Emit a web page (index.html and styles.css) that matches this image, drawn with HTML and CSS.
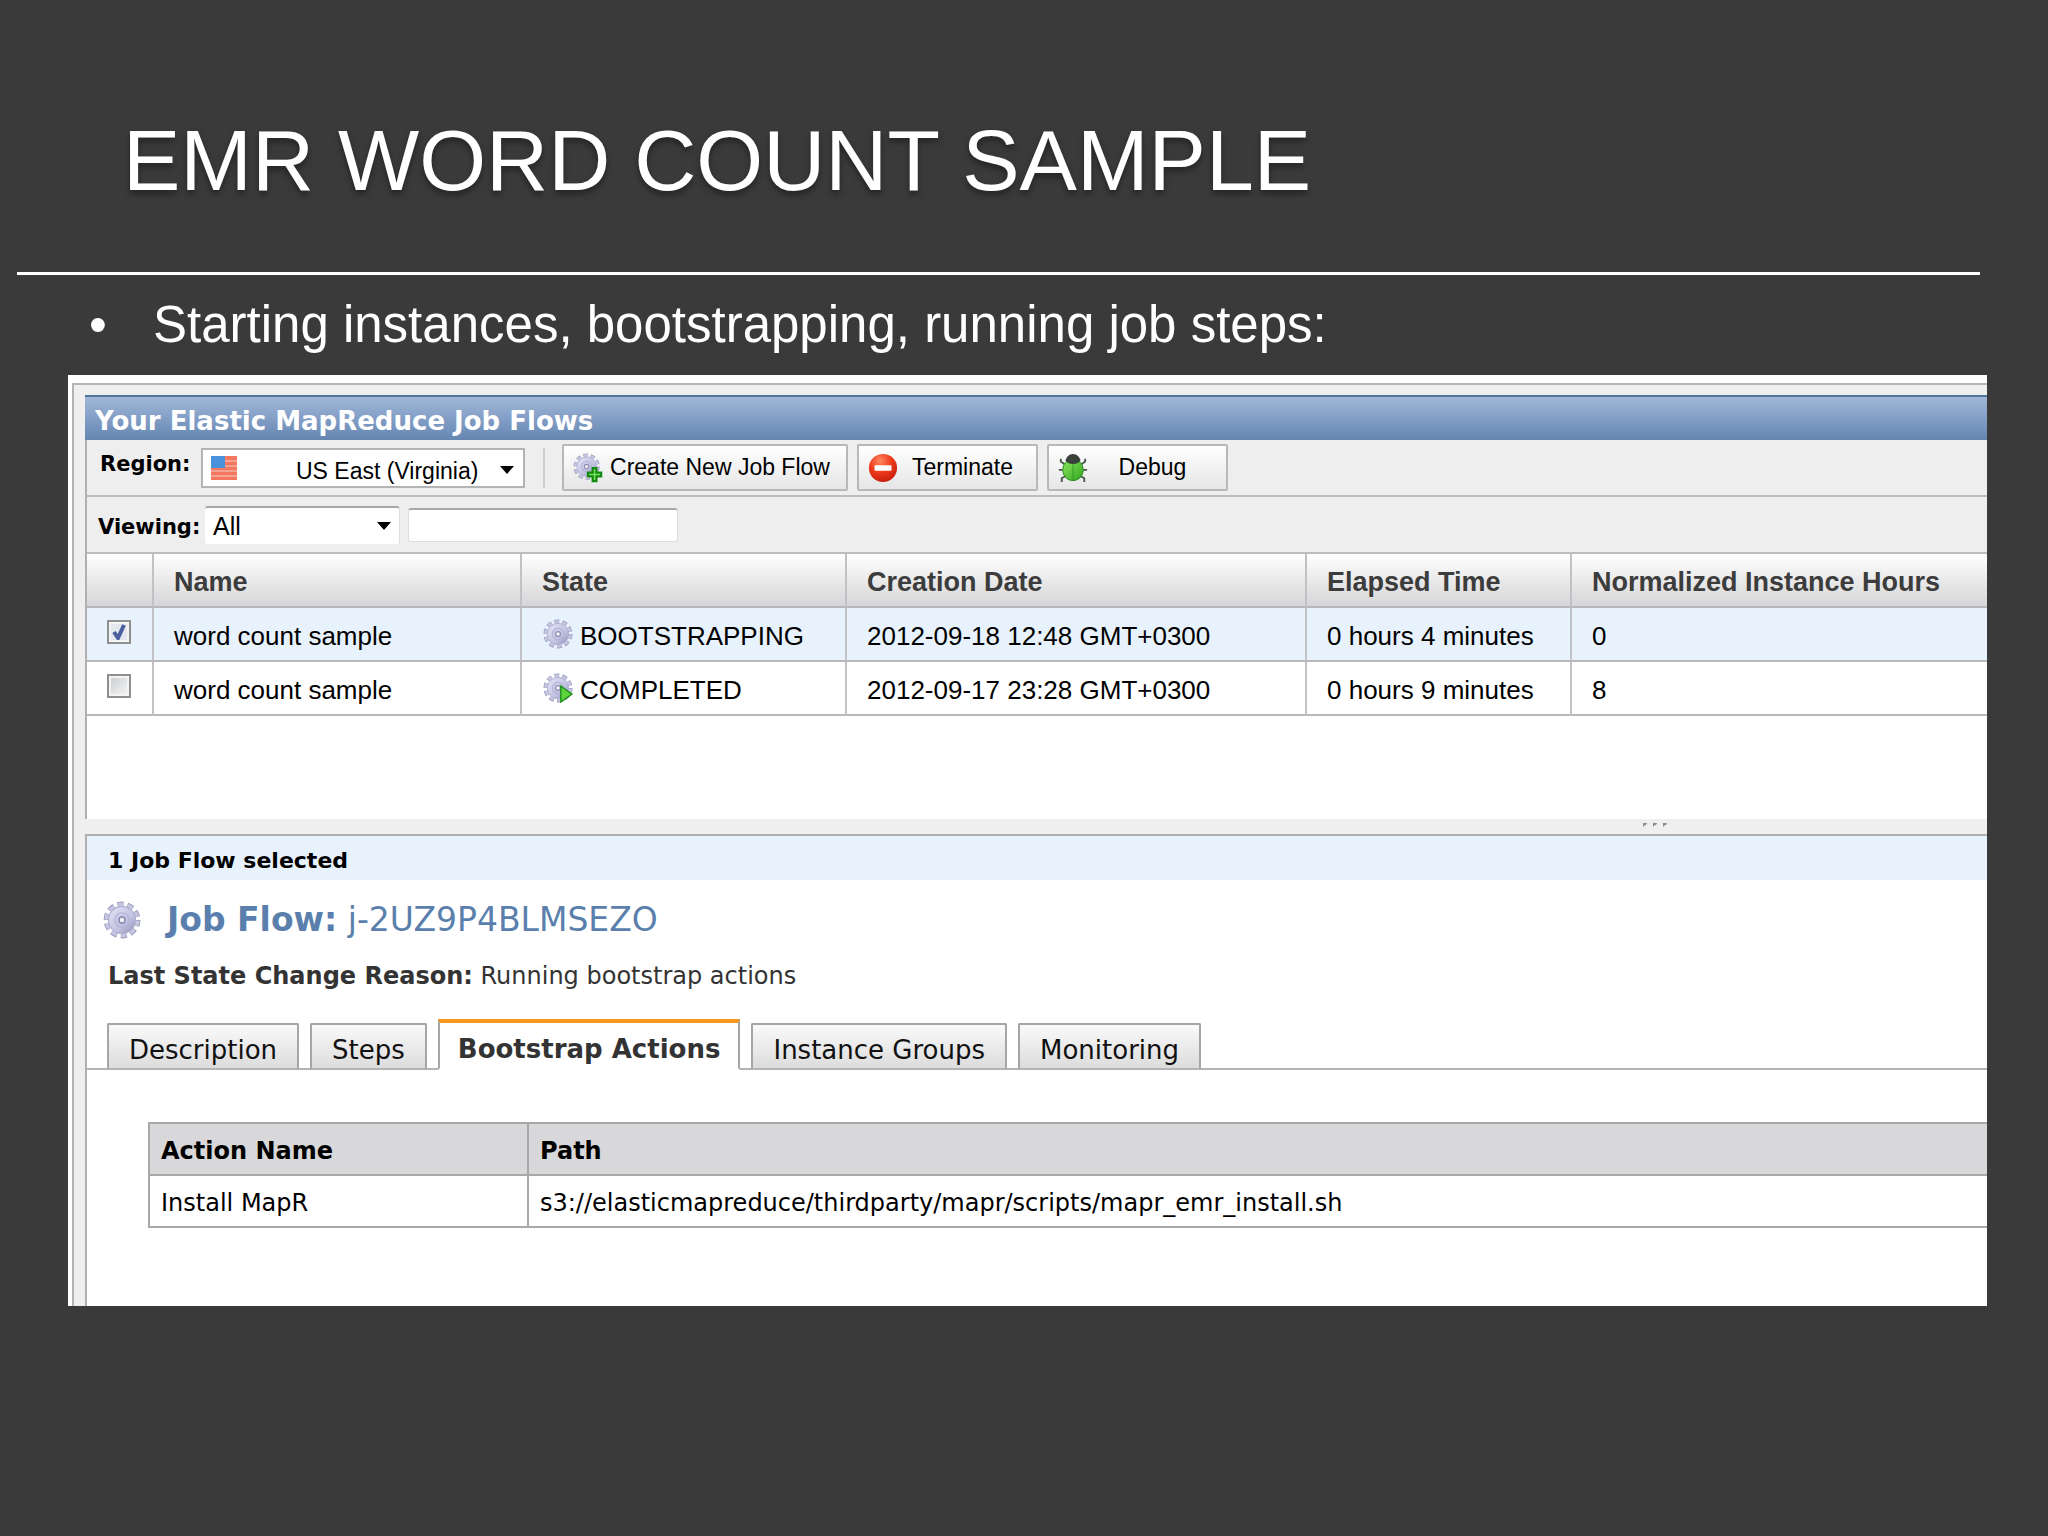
FILE: index.html
```html
<!DOCTYPE html>
<html lang="en">
<head>
    <meta charset="UTF-8">
    <meta name="viewport" content="width=device-width, initial-scale=1.0">
    <title>EMR Word Count Sample</title>
    <link rel="stylesheet" href="styles.css">
</head>
<body>
    <svg class="defs" width="0" height="0" aria-hidden="true">
        <defs>
            <linearGradient id="gearFill" x1="0" y1="0" x2="1" y2="1">
                <stop offset="0" stop-color="#e4e4f6"/>
                <stop offset="0.6" stop-color="#c3c3e2"/>
                <stop offset="1" stop-color="#8f8fb8"/>
            </linearGradient>
            <radialGradient id="redFill" cx="0.4" cy="0.25" r="0.8">
                <stop offset="0" stop-color="#ff8a60"/>
                <stop offset="0.5" stop-color="#ee3a1c"/>
                <stop offset="1" stop-color="#c41c0c"/>
            </radialGradient>
            <linearGradient id="bugFill" x1="0" y1="0" x2="1" y2="1">
                <stop offset="0" stop-color="#8ee860"/>
                <stop offset="1" stop-color="#2fa51c"/>
            </linearGradient>
            <symbol id="gear" viewBox="0 0 32 32">
                <circle cx="16" cy="16" r="13" fill="none" stroke="#9a9abc" stroke-width="5" stroke-dasharray="5 3.168"/>
                <circle cx="16" cy="16" r="12.7" fill="none" stroke="#c6c6e2" stroke-width="4" stroke-dasharray="4 3.98" stroke-dashoffset="-0.5"/>
                <circle cx="16" cy="16" r="11.4" fill="url(#gearFill)" stroke="#b0b0d0" stroke-width="1"/>
                <circle cx="16" cy="16" r="6" fill="none" stroke="#b4b4d6" stroke-width="1.2"/>
                <circle cx="16" cy="16" r="2.6" fill="#f2f2fa" stroke="#9090b4" stroke-width="1.4"/>
            </symbol>
        </defs>
    </svg>

    <header class="slide-header">
        <h1>EMR WORD COUNT SAMPLE</h1>
    </header>

    <main>
        <ul class="bullets">
            <li>Starting instances, bootstrapping, running job steps:</li>
        </ul>

        <div class="console">
            <div class="frame">
                <section class="flows">
                    <h2 class="flows-title">Your Elastic MapReduce Job Flows</h2>

                    <div class="toolbar">
                        <label class="region-label" for="region">Region:</label>
                        <div class="region-box">
                            <svg class="flag" viewBox="0 0 26 24" aria-hidden="true">
                                <rect width="26" height="24" fill="#f4775f"/>
                                <path d="M0 5h26M0 10h26M0 15h26M0 20h26" stroke="#f9b3a2" stroke-width="1.5"/>
                                <rect width="14" height="12" fill="#4a92dc"/>
                            </svg>
                            <select id="region" class="region-select">
                                <option>US East (Virginia)</option>
                            </select>
                        </div>
                        <span class="separator"></span>
                        <div class="actions">
                            <button class="action create" type="button">
                                <svg class="action-icon" viewBox="0 0 32 32" aria-hidden="true">
                                    <use href="#gear" width="29" height="29"/>
                                    <path d="M21 16h4v5h5v4h-5v5h-4v-5h-5v-4h5z" fill="#7be35a" stroke="#128a12" stroke-width="2.4"/>
                                </svg>
                                <span>Create New Job Flow</span>
                            </button>
                            <button class="action" type="button">
                                <svg class="action-icon" viewBox="0 0 32 32" aria-hidden="true">
                                    <circle cx="16" cy="16" r="15" fill="url(#redFill)"/>
                                    <rect x="7" y="13" width="18" height="6" rx="1" fill="#fff"/>
                                </svg>
                                <span>Terminate</span>
                            </button>
                            <button class="action" type="button">
                                <svg class="action-icon" viewBox="0 0 32 32" aria-hidden="true">
                                    <path d="M7 12L3 9V6M25 12l4-3V6M7 18H1M25 18h6M9 24l-5 3v4M23 24l5 3v4" fill="none" stroke="#4a5a4a" stroke-width="2"/>
                                    <ellipse cx="16" cy="18" rx="11" ry="11.5" fill="url(#bugFill)" stroke="#2a8a22"/>
                                    <path d="M8 8c1-4 4-7 8-7s7 3 8 7c-3 5-13 5-16 0z" fill="#3a403a"/>
                                    <path d="M16 12v17" stroke="#2f9a25" stroke-width="1"/>
                                </svg>
                                <span>Debug</span>
                            </button>
                        </div>
                    </div>

                    <div class="filterbar">
                        <label for="viewing">Viewing:</label>
                        <select id="viewing" class="viewing-select">
                            <option>All</option>
                        </select>
                        <input class="search" type="text" aria-label="Search job flows">
                    </div>

                    <table class="flow-table">
                        <thead>
                            <tr>
                                <th class="col-check"></th>
                                <th class="col-name">Name</th>
                                <th class="col-state">State</th>
                                <th class="col-date">Creation Date</th>
                                <th class="col-elapsed">Elapsed Time</th>
                                <th>Normalized Instance Hours</th>
                            </tr>
                        </thead>
                        <tbody>
                            <tr class="selected">
                                <td class="check-cell"><input type="checkbox" aria-label="Select bootstrapping job flow" checked></td>
                                <td>word count sample</td>
                                <td>
                                    <div class="state">
                                        <svg class="state-icon" viewBox="0 0 32 32" aria-hidden="true"><use href="#gear" width="32" height="32"/></svg>
                                        <span>BOOTSTRAPPING</span>
                                    </div>
                                </td>
                                <td>2012-09-18 12:48 GMT+0300</td>
                                <td>0 hours 4 minutes</td>
                                <td>0</td>
                            </tr>
                            <tr>
                                <td class="check-cell"><input type="checkbox" aria-label="Select completed job flow"></td>
                                <td>word count sample</td>
                                <td>
                                    <div class="state">
                                        <svg class="state-icon" viewBox="0 0 32 32" aria-hidden="true">
                                            <use href="#gear" width="32" height="32"/>
                                            <path d="M19 14l12 8.500-12 8.500z" fill="#5fd23c" stroke="#1c941c" stroke-width="1.5"/>
                                        </svg>
                                        <span>COMPLETED</span>
                                    </div>
                                </td>
                                <td>2012-09-17 23:28 GMT+0300</td>
                                <td>0 hours 9 minutes</td>
                                <td>8</td>
                            </tr>
                        </tbody>
                    </table>
                </section>

                <div class="splitter">
                    <svg class="grip" viewBox="0 0 28 6" aria-hidden="true">
                        <path d="M2 5V1h4l-1 2H4zM12 5V1h4l-1 2h-1zM22 5V1h4l-1 2h-1z" fill="#8c8c8c"/>
                    </svg>
                </div>

                <section class="details">
                    <p class="selection">1 Job Flow selected</p>
                    <h3 class="flow-id">
                        <svg class="flow-icon" viewBox="0 0 32 32" aria-hidden="true"><use href="#gear" width="32" height="32"/></svg>
                        <span><b>Job Flow:</b> j-2UZ9P4BLMSEZO</span>
                    </h3>
                    <p class="reason"><b>Last State Change Reason:</b> Running bootstrap actions</p>

                    <div class="tabs" role="tablist">
                        <button class="tab" type="button" role="tab">Description</button>
                        <button class="tab" type="button" role="tab">Steps</button>
                        <button class="tab active" type="button" role="tab" aria-selected="true">Bootstrap Actions</button>
                        <button class="tab" type="button" role="tab">Instance Groups</button>
                        <button class="tab" type="button" role="tab">Monitoring</button>
                    </div>

                    <div class="tab-panel">
                        <table class="action-table">
                            <thead>
                                <tr>
                                    <th class="col-action">Action Name</th>
                                    <th>Path</th>
                                </tr>
                            </thead>
                            <tbody>
                                <tr>
                                    <td>Install MapR</td>
                                    <td>s3://elasticmapreduce/thirdparty/mapr/scripts/mapr_emr_install.sh</td>
                                </tr>
                            </tbody>
                        </table>
                    </div>
                </section>
            </div>
        </div>
    </main>
</body>
</html>
```
FILE: styles.css
```css
* {
    box-sizing: border-box;
}
body {
    margin: 0;
    min-height: 100vh;
    background-color: #3b3a3b;
    color: #000;
    font-family: "Liberation Sans", Arial, sans-serif;
}
h1, h2, h3, p, ul {
    margin: 0;
    padding: 0;
}
.defs {
    position: absolute;
}

/* slide heading */
.slide-header {
    margin: 0 68px 0 17px;
    padding: 110px 0 62px 106px;
    border-bottom: 3px solid #fff;
}
h1 {
    color: #fff;
    font-size: 86px;
    font-weight: normal;
    line-height: 100px;
    text-shadow: 0 4px 6px rgba(0, 0, 0, 0.4);
}
.bullets {
    padding: 20px 0 20px 153px;
    color: #fff;
    font-size: 51px;
    line-height: 60px;
    list-style: none;
}
.bullets li::before {
    content: "•";
    float: left;
    margin-left: -64px;
}

/* console window */
.console {
    margin: 0 61px 0 68px;
    padding: 8px 0 0 4px;
    background-color: #fff;
}
.frame {
    padding: 10px 0 0 11px;
    background-color: #efefef;
    border: solid #b4b4b4;
    border-width: 2px 0 0 2px;
}
.flows {
    min-height: 424px;
    background-color: #fff;
    border-left: 2px solid #b0b0b0;
}
.flows-title {
    margin-left: -2px;
    padding: 7px 0 2px 10px;
    border-top: 2px solid #4f759e;
    background: linear-gradient(#a0b8d4, #89a3cb 40%, #6486b0);
    color: #fff;
    font: bold 26px/34px "DejaVu Sans", Verdana, sans-serif;
}
.toolbar,
.filterbar {
    display: flex;
    align-items: center;
    height: 57px;
    background-color: #efeeef;
    border-bottom: 2px solid #bcbcbc;
}
.toolbar label,
.filterbar label {
    font: bold 21px/24px "DejaVu Sans", Verdana, sans-serif;
}
.toolbar {
    padding-left: 13px;
}
.region-label {
    width: 101px;
    padding-bottom: 8px;
}
.region-box {
    display: flex;
    align-items: center;
    width: 324px;
    height: 40px;
    padding-left: 8px;
    background-color: #fff;
    border: 2px solid #b4b4b4;
}
.flag {
    width: 26px;
    height: 24px;
}
select {
    appearance: none;
    border: none;
    border-radius: 0;
    color: #000;
    font-family: inherit;
    background: #fff url("data:image/svg+xml,%3Csvg xmlns='http://www.w3.org/2000/svg' viewBox='0 0 14 8'%3E%3Cpath d='M0 0h14L7 8z'/%3E%3C/svg%3E") no-repeat;
    background-size: 14px 8px;
}
.region-select {
    flex: 1;
    height: 36px;
    padding: 6px 0 0 59px;
    font-size: 23px;
    background-position: right 9px top 16px;
}
.separator {
    width: 2px;
    height: 40px;
    margin: 0 17px 0 18px;
    background-color: #cfcfcf;
}
.actions {
    display: flex;
    gap: 9px;
}
.action {
    display: flex;
    align-items: center;
    width: 181px;
    height: 47px;
    padding: 0 9px;
    border: 2px solid #b8b8b8;
    border-radius: 2px;
    background: linear-gradient(#fff, #e6e6e6);
    color: #000;
    font-family: inherit;
    font-size: 23px;
}
.action.create {
    width: 286px;
}
.action span {
    flex: 1;
    text-align: center;
}
.action-icon {
    width: 30px;
    height: 30px;
}
.filterbar {
    padding-left: 11px;
}
.filterbar label {
    width: 107px;
    padding-top: 4px;
}
.viewing-select {
    width: 195px;
    height: 38px;
    padding: 0 8px;
    border-top: 2px solid #a8a8a8;
    border-right: 1px solid #ddd;
    border-radius: 3px;
    font-size: 25px;
    background-position: right 8px center;
}
.search {
    width: 270px;
    height: 34px;
    margin-left: 8px;
    padding: 0 8px;
    border: 1px solid #ddd;
    border-top: 2px solid #a8a8a8;
    border-radius: 3px;
    font-size: 25px;
}

/* job flow list */
.flow-table {
    width: 100%;
    table-layout: fixed;
    border-collapse: separate;
    border-spacing: 0;
    font-size: 26px;
    line-height: 30px;
}
.flow-table th,
.flow-table td {
    height: 54px;
    padding: 4px 0 0 20px;
    border-right: 2px solid #c2c2c6;
    border-bottom: 2px solid #b8b8ba;
    text-align: left;
    white-space: nowrap;
}
.flow-table th:last-child,
.flow-table td:last-child {
    border-right: none;
}
.flow-table th {
    background: linear-gradient(#fff, #d6d5d7);
    color: #3c3c3c;
    font-size: 27px;
}
.flow-table .check-cell {
    padding: 0 0 5px 20px;
}
.selected td {
    background-color: #e8f2fd;
}
.col-check {
    width: 67px;
}
.col-name {
    width: 368px;
}
.col-state {
    width: 325px;
}
.col-date {
    width: 460px;
}
.col-elapsed {
    width: 265px;
}
.check-cell input {
    appearance: none;
    display: block;
    width: 24px;
    height: 24px;
    margin: 0;
    border: 2px solid #8e8f8f;
    box-shadow: inset 0 0 0 2px #f4f4f4;
    background: linear-gradient(135deg, #c8ccd0, #f6f6f6);
}
.check-cell input:checked {
    background: #e4e7ee url("data:image/svg+xml,%3Csvg xmlns='http://www.w3.org/2000/svg' viewBox='0 0 20 20'%3E%3Cpath d='M5 10l4 6 6-13' fill='none' stroke='%234a5f9e' stroke-width='4'/%3E%3C/svg%3E") center / 20px no-repeat;
}
.state {
    display: flex;
    align-items: center;
    gap: 7px;
    height: 30px;
}
.state-icon {
    width: 30px;
    height: 30px;
    margin: 0 0 5px 1px;
}
.splitter {
    display: flex;
    justify-content: flex-end;
    height: 15px;
    padding: 3px 318px 0 0;
}
.grip {
    width: 28px;
    height: 6px;
}

/* selected job flow */
.details {
    border: solid #b0b0b0;
    border-width: 2px 0 0 2px;
    background-color: #fff;
    font-family: "DejaVu Sans", Verdana, sans-serif;
}
.selection {
    padding: 12px 21px 6px;
    background-color: #e8f2fd;
    font-size: 22px;
    font-weight: bold;
    line-height: 26px;
}
.flow-id {
    display: flex;
    align-items: center;
    gap: 26px;
    padding: 20px 0 20px 16px;
    color: #5b7fac;
    font-size: 33px;
    font-weight: normal;
    line-height: 40px;
}
.flow-icon {
    width: 38px;
    height: 38px;
}
.reason {
    padding: 1px 21px 28px;
    color: #333;
    font-size: 24px;
    line-height: 30px;
}
.tabs {
    display: flex;
    align-items: flex-end;
    gap: 11px;
    padding-left: 20px;
    box-shadow: inset 0 -2px #b4b4b4;
}
.tab {
    height: 47px;
    padding: 6px 20px 0;
    border: 2px solid #a6a6a6;
    border-bottom-color: #b4b4b4;
    border-radius: 2px 2px 0 0;
    background: linear-gradient(#fafafa, #dcdcdc);
    color: #111;
    font-family: inherit;
    font-size: 26px;
}
.tab.active {
    height: 51px;
    padding: 6px 18px 0;
    border-top: 4px solid #f7981d;
    border-bottom-color: #fff;
    border-radius: 0;
    background: #fff;
    color: #333;
    font-weight: bold;
}
.tab-panel {
    padding: 52px 0 78px 61px;
}
.action-table {
    width: 100%;
    table-layout: fixed;
    border-collapse: collapse;
    font-size: 24px;
    line-height: 30px;
}
.action-table th,
.action-table td {
    height: 52px;
    padding: 4px 11px 0;
    border: 2px solid #a8a8a8;
    border-right: none;
    text-align: left;
    white-space: nowrap;
}
.action-table th {
    background-color: #d8d7d9;
}
.col-action {
    width: 379px;
}
```
